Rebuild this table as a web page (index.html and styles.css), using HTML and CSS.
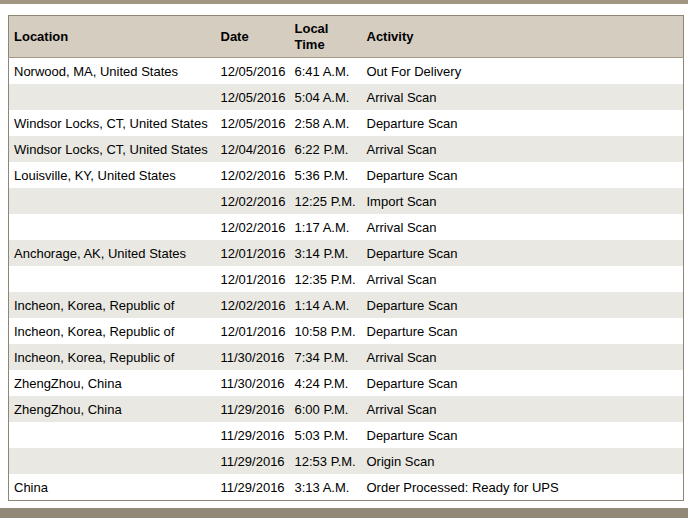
FILE: index.html
```html
<!DOCTYPE html>
<html>
<head>
<meta charset="utf-8">
<link rel="stylesheet" href="styles.css">
</head>
<body>
<div class="topbar"></div>
<div class="wrap">
<table class="track">
<colgroup><col class="c1"><col class="c2"><col class="c3"><col class="c4"></colgroup>
<thead>
<tr><th>Location</th><th>Date</th><th>Local<br>Time</th><th>Activity</th></tr>
</thead>
<tbody>
<tr><td>Norwood, MA, United States</td><td>12/05/2016</td><td>6:41 A.M.</td><td>Out For Delivery</td></tr>
<tr><td></td><td>12/05/2016</td><td>5:04 A.M.</td><td>Arrival Scan</td></tr>
<tr><td>Windsor Locks, CT, United States</td><td>12/05/2016</td><td>2:58 A.M.</td><td>Departure Scan</td></tr>
<tr><td>Windsor Locks, CT, United States</td><td>12/04/2016</td><td>6:22 P.M.</td><td>Arrival Scan</td></tr>
<tr><td>Louisville, KY, United States</td><td>12/02/2016</td><td>5:36 P.M.</td><td>Departure Scan</td></tr>
<tr><td></td><td>12/02/2016</td><td>12:25 P.M.</td><td>Import Scan</td></tr>
<tr><td></td><td>12/02/2016</td><td>1:17 A.M.</td><td>Arrival Scan</td></tr>
<tr><td>Anchorage, AK, United States</td><td>12/01/2016</td><td>3:14 P.M.</td><td>Departure Scan</td></tr>
<tr><td></td><td>12/01/2016</td><td>12:35 P.M.</td><td>Arrival Scan</td></tr>
<tr><td>Incheon, Korea, Republic of</td><td>12/02/2016</td><td>1:14 A.M.</td><td>Departure Scan</td></tr>
<tr><td>Incheon, Korea, Republic of</td><td>12/01/2016</td><td>10:58 P.M.</td><td>Departure Scan</td></tr>
<tr><td>Incheon, Korea, Republic of</td><td>11/30/2016</td><td>7:34 P.M.</td><td>Arrival Scan</td></tr>
<tr><td>ZhengZhou, China</td><td>11/30/2016</td><td>4:24 P.M.</td><td>Departure Scan</td></tr>
<tr><td>ZhengZhou, China</td><td>11/29/2016</td><td>6:00 P.M.</td><td>Arrival Scan</td></tr>
<tr><td></td><td>11/29/2016</td><td>5:03 P.M.</td><td>Departure Scan</td></tr>
<tr><td></td><td>11/29/2016</td><td>12:53 P.M.</td><td>Origin Scan</td></tr>
<tr><td>China</td><td>11/29/2016</td><td>3:13 A.M.</td><td>Order Processed: Ready for UPS</td></tr>
</tbody>
</table>
</div>
<div class="bottombar"></div>
</body>
</html>
```

FILE: styles.css
```css
html, body {
  margin: 0;
  padding: 0;
  background: #ffffff;
}
body {
  font-family: "Liberation Sans", Arial, sans-serif;
  font-size: 13px;
  color: #000000;
  width: 688px;
  height: 518px;
  overflow: hidden;
}
.topbar {
  height: 4px;
  background: #a19582;
}
.wrap {
  padding: 11px 4px 7px 8px;
}
.track {
  width: 676px;
  border-collapse: collapse;
  table-layout: fixed;
  border: 1px solid #8f8574;
}
.c1 { width: 207px; }
.c2 { width: 74px; }
.c3 { width: 72px; }
.track th {
  background: #d5cdc0;
  font-weight: bold;
  text-align: left;
  line-height: 16px;
  height: 41px;
  padding: 0 5px;
  vertical-align: middle;
  border-bottom: 1px solid #a39986;
}
.track td {
  height: 26px;
  padding: 0 5px;
  line-height: 15px;
  vertical-align: middle;
  white-space: nowrap;
}
.track tbody tr:nth-child(even) td {
  background: #e9e8e2;
}
.bottombar {
  height: 10px;
  background: #928877;
}
```
